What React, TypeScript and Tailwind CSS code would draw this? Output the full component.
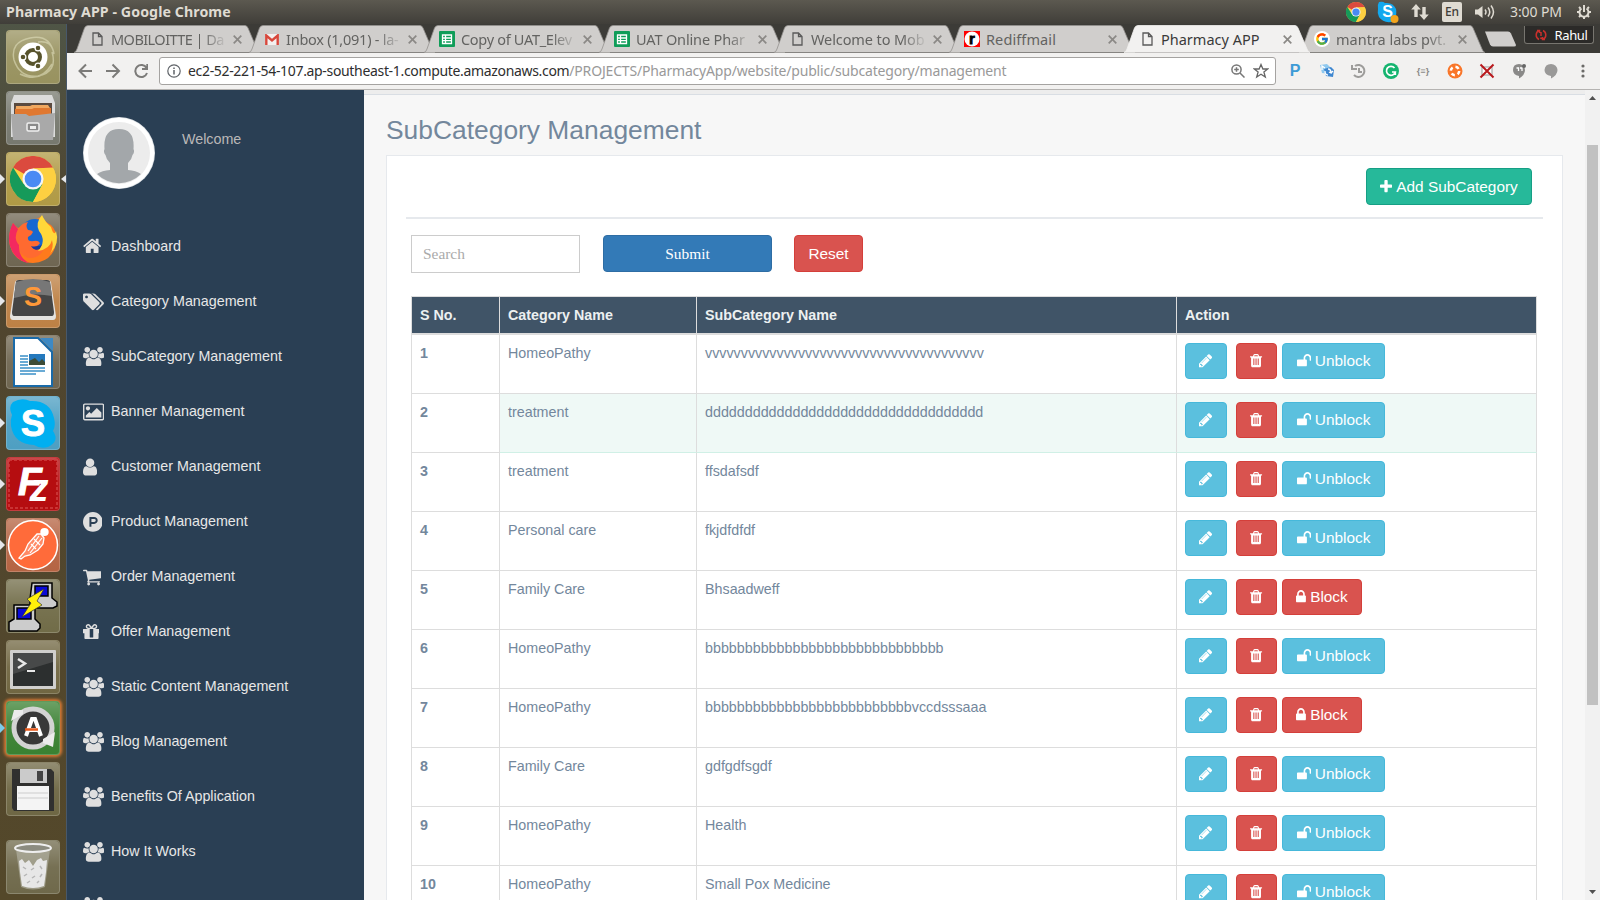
import React from "react";
import { FcGoogle } from "react-icons/fc";

const glyphs = {
  home: ["64 0 1664 1792", "M1472 992v480q0 26-19 45t-45 19h-384v-384h-256v384h-384q-26 0-45-19t-19-45v-480q0-1 .5-3t.5-3l575-474 575 474q1 2 1 6zm223-69l-62 74q-8 9-21 11h-3q-13 0-21-7l-692-577-692 577q-12 8-24 7-13-2-21-11l-62-74q-8-10-7-23.5t11-21.5l719-599q32-26 76-26t76 26l244 204v-195q0-14 9-23t23-9h192q14 0 23 9t9 23v408l219 182q10 8 11 21.5t-7 23.5z"],
  tags: ["0 0 1920 1792", "M448 448q0-53-37.5-90.5t-90.5-37.5-90.5 37.5-37.5 90.5 37.5 90.5 90.5 37.5 90.5-37.5 37.5-90.5zm1067 576q0 53-37 90l-491 492q-39 37-91 37-53 0-90-37l-715-716q-38-37-64.5-101t-26.5-117v-416q0-52 38-90t90-38h416q53 0 117 26.5t102 64.5l715 714q37 39 37 91zm384 0q0 53-37 90l-491 492q-39 37-91 37-36 0-59-14t-53-45l470-470q37-37 37-90 0-52-37-91l-715-714q-38-38-102-64.5t-117-26.5h224q53 0 117 26.5t102 64.5l715 714q37 39 37 91z"],
  users: ["0 0 1920 1792", "M593 896q-162 5-265 128h-134q-82 0-138-40.5t-56-118.5q0-353 124-353 6 0 43.5 21t97.5 42.5 119 21.5q67 0 133-23-5 37-5 66 0 139 81 256zm1071 637q0 120-73 189.5t-194 69.5h-874q-121 0-194-69.5t-73-189.5q0-53 3.5-103.5t14-109 26.5-108.5 43-97.5 62-81 85.5-53.5 111.5-20q10 0 43 21.5t73 48 107 48 135 21.5 135-21.5 107-48 73-48 43-21.5q61 0 111.5 20t85.5 53.5 62 81 43 97.5 26.5 108.5 14 109 3.5 103.5zm-1024-1277q0 106-75 181t-181 75-181-75-75-181 75-181 181-75 181 75 75 181zm704 384q0 159-112.5 271.5t-271.5 112.5-271.5-112.5-112.5-271.5 112.5-271.5 271.5-112.5 271.5 112.5 112.5 271.5zm576 225q0 78-56 118.5t-138 40.5h-134q-103-123-265-128 81-117 81-256 0-29-5-66 66 23 133 23 59 0 119-21.5t97.5-42.5 43.5-21q124 0 124 353zm-128-609q0 106-75 181t-181 75-181-75-75-181 75-181 181-75 181 75 75 181z"],
  image: ["0 0 1920 1792", "M640 576q0 80-56 136t-136 56-136-56-56-136 56-136 136-56 136 56 56 136zm1024 384v448h-1408v-192l320-320 160 160 512-512zm96-704h-1600q-13 0-22.5 9.5t-9.5 22.5v1216q0 13 9.5 22.5t22.5 9.5h1600q13 0 22.5-9.5t9.5-22.5v-1216q0-13-9.5-22.5t-22.5-9.5zm160 32v1216q0 66-47 113t-113 47h-1600q-66 0-113-47t-47-113v-1216q0-66 47-113t113-47h1600q66 0 113 47t47 113z"],
  user: ["256 0 1280 1792", "M1536 1399q0 109-62.5 187t-150.5 78h-854q-88 0-150.5-78t-62.5-187q0-85 8.5-160.5t31.5-152 58.5-131 94-89 134.5-34.5q131 128 313 128t313-128q76 0 134.5 34.5t94 89 58.5 131 31.5 152 8.5 160.5zm-256-887q0 159-112.5 271.5t-271.5 112.5-271.5-112.5-112.5-271.5 112.5-271.5 271.5-112.5 271.5 112.5 112.5 271.5z"],
  product: ["0 0 1792 1792", "M1150 762q0 56-39.5 95t-95.5 39h-253v-269h253q56 0 95.5 39.5t39.5 95.5zm179 0q0-130-91.5-222t-222.5-92h-433v896h180v-269h253q130 0 222-91.5t92-221.5zm463 134q0 182-71 348t-191 286-286 191-348 71-348-71-286-191-191-286-71-348 71-348 191-286 286-191 348-71 348 71 286 191 191 286 71 348z"],
  cart: ["64 0 1664 1792", "M704 1536q0 52-38 90t-90 38-90-38-38-90 38-90 90-38 90 38 38 90zm896 0q0 52-38 90t-90 38-90-38-38-90 38-90 90-38 90 38 38 90zm128-1088v512q0 24-16.5 42.5t-40.5 21.5l-1044 122q13 60 13 70 0 16-24 64h920q26 0 45 19t19 45-19 45-45 19h-1024q-26 0-45-19t-19-45q0-11 8-31.5t16-36 21.5-40 15.5-29.5l-177-823h-204q-26 0-45-19t-19-45 19-45 45-19h256q16 0 28.5 6.5t19.5 15.5 13 24.5 8 26 5.5 29.5 4.5 26h1201q26 0 45 19t19 45z"],
  gift: ["128 0 1536 1792", "M1056 1356v-716h-320v716q0 25 18 38.5t46 13.5h192q28 0 46-13.5t18-38.5zm-456-844h195l-126-161q-26-31-69-31-40 0-68 28t-28 68 28 68 68 28zm688-96q0-40-28-68t-68-28q-43 0-69 31l-125 161h194q40 0 68-28t28-68zm376 256v320q0 14-9 23t-23 9h-96v416q0 40-28 68t-68 28h-1088q-40 0-68-28t-28-68v-416h-96q-14 0-23-9t-9-23v-320q0-14 9-23t23-9h440q-93 0-158.5-65.5t-65.5-158.5 65.5-158.5 158.5-65.5q107 0 168 77l128 165 128-165q61-77 168-77 93 0 158.5 65.5t65.5 158.5-65.5 158.5-158.5 65.5h440q14 0 23 9t9 23z"],
  trash: ["192 0 1408 1792", "M704 1376v-704q0-14-9-23t-23-9h-64q-14 0-23 9t-9 23v704q0 14 9 23t23 9h64q14 0 23-9t9-23zm256 0v-704q0-14-9-23t-23-9h-64q-14 0-23 9t-9 23v704q0 14 9 23t23 9h64q14 0 23-9t9-23zm256 0v-704q0-14-9-23t-23-9h-64q-14 0-23 9t-9 23v704q0 14 9 23t23 9h64q14 0 23-9t9-23zm-544-992h448l-48-117q-7-9-17-11h-317q-10 2-17 11zm928 32v64q0 14-9 23t-23 9h-96v948q0 83-47 143.5t-113 60.5h-832q-66 0-113-58.5t-47-141.5v-952h-96q-14 0-23-9t-9-23v-64q0-14 9-23t23-9h309l70-167q15-37 54-63t79-26h320q40 0 79 26t54 63l70 167h309q14 0 23 9t9 23z"],
  pencil: ["128 0 1536 1792", "M491 1536l91-91-235-235-91 91v107h128v128h107zm523-928q0-22-22-22-10 0-17 7l-542 542q-7 7-7 17 0 22 22 22 10 0 17-7l542-542q7-7 7-17zm-54-192l416 416-832 832h-416v-416zm683 96q0 53-37 90l-166 166-416-416 166-165q36-38 90-38 53 0 91 38l235 234q37 39 37 91z"],
  plus: ["192 0 1408 1792", "M1600 736v192q0 40-28 68t-68 28h-416v416q0 40-28 68t-68 28h-192q-40 0-68-28t-28-68v-416h-416q-40 0-68-28t-28-68v-192q0-40 28-68t68-28h416v-416q0-40 28-68t68-28h192q40 0 68 28t28 68v416h416q40 0 68 28t28 68z"],
  lock: ["320 0 1152 1792", "M640 768h512v-192q0-106-75-181t-181-75-181 75-75 181v192zm832 96v576q0 40-28 68t-68 28h-960q-40 0-68-28t-28-68v-576q0-40 28-68t68-28h32v-192q0-184 132-316t316-132 316 132 132 316v192h32q40 0 68 28t28 68z"],
  unlock: ["64 0 1664 1792", "M1728 576v256q0 26-19 45t-45 19h-64q-26 0-45-19t-19-45v-256q0-106-75-181t-181-75-181 75-75 181v192h96q40 0 68 28t28 68v576q0 40-28 68t-68 28h-960q-40 0-68-28t-28-68v-576q0-40 28-68t68-28h672v-192q0-185 131.5-316.5t316.5-131.5 316.5 131.5 131.5 316.5z"],
} as const;

type GlyphName = keyof typeof glyphs;

function Glyph({ name, className }: { name: GlyphName; className: string }) {
  const [box, d] = glyphs[name];
  return (
    <svg viewBox={box} className={`w-auto shrink-0 ${className}`} fill="currentColor">
      <path d={d} />
    </svg>
  );
}

/* ---------- System panel ---------- */

function ChromeLogo({ className }: { className: string }) {
  return (
    <svg viewBox="0 0 48 48" className={className}>
      <circle cx="24" cy="24" r="24" fill="#fdd041" />
      <path d="M24 24 3.2 12A24 24 0 0 1 44.8 12L24 13Z" fill="#db4a3e" />
      <path d="M3.2 12A24 24 0 0 0 24 48L34 30 24 24 14 29Z" fill="#169a5a" />
      <path d="M24 13H45.3A24 24 0 0 1 24 48L34 29Z" fill="#fdd041" />
      <circle cx="24" cy="24" r="11" fill="#f5f5f5" />
      <circle cx="24" cy="24" r="8.7" fill="#4a8af4" />
    </svg>
  );
}

function SystemPanel() {
  return (
    <header className="flex h-6 shrink-0 items-center justify-between bg-linear-to-b from-[#5c5950] to-[#403e39] pl-1.5 pr-2 text-[#dfdbd2]">
      <span className="text-[14.2px] font-bold leading-6 tracking-[0.08px]">Pharmacy APP - Google Chrome</span>
      <div className="flex items-center">
        <ChromeLogo className="size-5" />
        <svg viewBox="0 0 22 22" className="ml-[11px] size-[22px]">
          <path d="M2 1q4-1 6 1 8-1 11 6 1 5-1 8 1 5-4 5-8 1-12-5Q0 12 1 8q-1-4 1-7Z" fill="#12a8ee" />
          <text x="10.5" y="16" textAnchor="middle" fontSize="16" fontWeight="700" fill="#fff" fontFamily="Liberation Sans">S</text>
          <circle cx="17.5" cy="18" r="4" fill="#f4a51c" />
        </svg>
        <svg viewBox="0 0 18 18" className="ml-3 size-[18px]" fill="#dfdbd2">
          <path d="M5 1 9.8 6.500H6.700V14H3.300V6.500H.2ZM13 17 8.200 11.500H11.300V4H14.700V11.500H17.800Z" />
        </svg>
        <span className="ml-[13px] flex h-5 w-5 items-center justify-center rounded-[2px] bg-[#dfdbd2] text-[12px] font-medium text-[#3f3d38]">En</span>
        <svg viewBox="0 0 20 16" className="ml-[13px] h-4 w-5" fill="none" stroke="#dfdbd2" strokeWidth="1.500">
          <path d="M0 5.500H3L7.500 2V14L3 10.500H0Z" fill="#dfdbd2" stroke="none" />
          <path d="M10 5.500q2 2.500 0 5M13 3.500q3.500 4.500 0 9M16 1.500q5 6.500 0 13" />
        </svg>
        <span className="ml-[15px] w-[53px] whitespace-nowrap text-[14px] leading-5 tracking-[-0.1px]">3:00 PM</span>
        <svg viewBox="0 0 16 16" className="ml-[13px] size-4" fill="none" stroke="#dfdbd2">
          <path d="M5.500 4.500a4.500 4.500 0 1 0 5 0M8 1V8" strokeWidth="2" />
          <path d="M8 15v-2M1 8h2M13 8h2M3 3l1.500 1.500M13 3l-1.500 1.500M3 13l1.500-1.500M13 13l-1.500-1.500" strokeWidth="2" />
        </svg>
      </div>
    </header>
  );
}

/* ---------- Launcher ---------- */

const appArt: Record<string, React.ReactNode> = {
  ubuntu: (
    <>
      <path d="M8 30Q4 12 24 8 44 4 48 24 46 10 32 12M46 22Q52 42 32 46 14 48 8 30M14 44Q34 54 46 34" fill="none" stroke="#e0debb" strokeWidth="1.500" opacity=".6" />
      <circle cx="27" cy="27" r="14.500" fill="#fff" />
      <circle cx="27" cy="27" r="7" fill="none" stroke="#57532c" strokeWidth="4" />
      <g fill="#57532c" stroke="#fff" strokeWidth="1.200"><circle cx="17" cy="27" r="2.900" /><circle cx="32" cy="18" r="2.900" /><circle cx="32" cy="36" r="2.900" /></g>
    </>
  ),
  files: (
    <>
      <path d="M8 4H46L49 12V46H5V12Z" fill="#dcdcdc" />
      <path d="M8 12H46V26H8Z" fill="#5a4a40" />
      <path d="M10 15H24L26 14H42L44 17V26H9Z" fill="#f0a860" /><path d="M9 18H26L28 17H45V26H9Z" fill="#e07830" />
      <path d="M5 23H20L23 25 49 22 47 49H7Z" fill="#a9a9a9" />
      <rect x="21" y="32" width="12" height="8" rx="1.500" fill="#8a8a8a" stroke="#eee" strokeWidth="1.500" /><rect x="24" y="35" width="6" height="3" fill="#eee" />
    </>
  ),
  firefox: (
    <>
      <path d="M7 11Q1 22 4 33 9 50 27 50 46 49 50 31 52 19 45 12 38 9 36 3L20 12 12 15Z" fill="#ff7a1c" />
      <circle cx="29" cy="21" r="15" fill="#1668d0" />
      <path d="M20 27Q31 40 43 26 42 36 30 37 20 36 16 29Z" fill="#183a9c" />
      <path d="M7 10 12 16Q16 10 22 9 19 13 22 17 26 17 27 19 26 22 22 24 21 29 28 28 32 27 34 30 31 35 25 33 29 40 38 35 34 46 22 45 8 38 6 26 4 17 7 10Z" fill="#ff6a30" />
      <path d="M7 10Q1 22 4 33 9 48 23 50 12 44 13 32 7 26 12 16Z" fill="#f3295f" />
      <path d="M36 2Q29 10 33 18 41 28 32 38 44 36 46 27 48 34 44 41 54 30 50 18 48 24 45 14 39 9 36 2Z" fill="#ffd83a" />
    </>
  ),
  sublime: (
    <>
      <path d="M9 8Q10 6 13 6H41Q44 6 45 8L50 42Q50 46 47 46H7Q4 46 4 42Z" fill="#e4e2df" />
      <path d="M10 8Q10 6 13 6H41Q44 6 44 8L48 38Q48 42 46 42H8Q6 42 6 38Z" fill="#454545" /><path d="M10 8Q27 2 44 8L46 22Q27 18 8 24Z" fill="#777" />
      <text x="27" y="32" textAnchor="middle" fontSize="27" fontWeight="700" fill="#ff9838" fontFamily="Liberation Sans">S</text>
    </>
  ),
  writer: (
    <>
      <path d="M8 3H32L46 17V51H8Z" fill="#fff" stroke="#1a6aa8" strokeWidth="2" /><path d="M34 3H47V16Z" fill="#3d89c4" />
      <path d="M14 21H22M14 24H22M14 27H22M14 30H22M14 33H39M14 36H39M14 39H30" stroke="#3a90c8" strokeWidth="1.700" />
      <rect x="23" y="19" width="16" height="11" fill="#2579bd" /><path d="M23 30V26L29 23 33 27 36 24 39 27V30Z" fill="#3c4c38" />
    </>
  ),
  skype: (
    <>
      <path d="M7 6Q16 1 24 5 44 4 48 22 50 30 47 35 54 45 42 51 34 53 28 49 8 48 5 30 4 24 6 19 2 11 7 6Z" fill="#00aff0" />
      <text x="27" y="40" textAnchor="middle" fontSize="36" fontWeight="700" fill="#fff" stroke="#fff" strokeWidth="1" fontFamily="Liberation Sans">S</text>
    </>
  ),
  filezilla: (
    <>
      <rect x="3" y="3" width="48" height="48" fill="#b50d10" stroke="#cf4040" strokeWidth="1.500" strokeDasharray="3 2" />
      <text x="24" y="38" textAnchor="middle" fontSize="39" fontWeight="700" fontStyle="italic" fill="#fff" stroke="#fff" strokeWidth="1" fontFamily="Liberation Sans">F</text>
      <text x="33" y="44" textAnchor="middle" fontSize="38" fontWeight="700" fontStyle="italic" fill="#fff" fontFamily="Liberation Sans">z</text>
    </>
  ),
  postman: (
    <>
      <circle cx="27" cy="27" r="24.500" fill="#ff6b3a" stroke="#fff" strokeWidth="1.500" />
      <ellipse cx="38.500" cy="14" rx="4.200" ry="4" fill="#fff" />
      <path d="M31 16 35 16 38 20 37 26 32 32 24 37 19 38 15 41 13 40 19 33 22 26Z" fill="#ff8a66" stroke="#fff" strokeWidth="1.300" />
      <path d="M33 18 22 33M36 20 24 35M28 21 34 27M25 26 30 31" stroke="#fff" strokeWidth="1.200" />
    </>
  ),
  putty: (
    <g stroke="#000" strokeWidth="1.500">
      <path d="M26 4H46V19L51 23V27L47 29H24V20Z" fill="#ccc" /><rect x="29" y="7" width="13" height="10" fill="#0a0ad8" />
      <path d="M8 26H29V40L34 45V49L31 52H3V43L8 40Z" fill="#ccc" /><rect x="11" y="29" width="14" height="11" fill="#0a0ad8" />
      <path d="M38 10 21 20 25 24 16 38 36 26 31 22Z" fill="#ffef0a" stroke="#333" strokeWidth=".7" />
    </g>
  ),
  terminal: (
    <>
      <rect x="4" y="10" width="46" height="39" rx="1" fill="#d0cfcd" /><rect x="7" y="13" width="40" height="33" fill="#2c2f2f" /><path d="M7 13H47V22L7 34Z" fill="#565858" opacity=".65" />
      <path d="M12 19 19 23.500 12 28" fill="none" stroke="#e8e8e8" strokeWidth="2.500" /><path d="M21 31H29" stroke="#e8e8e8" strokeWidth="2" />
    </>
  ),
  updater: (
    <>
      <circle cx="27" cy="27" r="19" fill="#383838" stroke="#d3d3d3" strokeWidth="5" />
      <path d="M5 20 17 13 17 9 8 9ZM37 38 49 31 47 46 37 42Z" fill="#ececec" />
      <path d="M20 35 26 18H29L35 35M21 29H34" fill="none" stroke="#fff" strokeWidth="4" /><path d="M19 28.500H32" stroke="#e85a1c" strokeWidth="2.500" />
    </>
  ),
  floppy: (
    <>
      <path d="M6 7H45L48 10V49H8L6 46Z" fill="#30302f" /><rect x="14" y="7" width="27" height="14" fill="#cbcbcb" /><rect x="31" y="9" width="6" height="10" fill="#444" />
      <path d="M11 24H43V48H11Z" fill="#f4f4f4" /><path d="M12 31H42M12 36H42" stroke="#ccc" />
    </>
  ),
  trash: (
    <>
      <path d="M10 9 15 47Q27 52 39 47L44 9Z" fill="#b9b9ac" opacity=".6" /><ellipse cx="27" cy="8" rx="18" ry="4" fill="#8c8c80" stroke="#eee" strokeWidth="2" />
      <path d="M13 21 16 19 19 23 23 20 27 26 31 20 35 18 37 21 41 20 40 32 38 46Q27 50 16 46L14 32Z" fill="#e7e7e7" />
      <path d="M17 27 20 29M25 30 28 28M34 26 36 29M18 36 21 34M26 38 29 36M34 37 36 34M21 43 24 41M31 43 33 41" fill="none" stroke="#b5b5b5" strokeWidth="1.500" />
    </>
  ),
};

const launcherItems = [
  { id: "ubuntu", tile: "bg-[#98925f]" },
  { id: "files", tile: "bg-[#77796f]" },
  { id: "chrome", tile: "bg-[#b09a45]", running: "text-gray-200", focused: true },
  { id: "firefox", tile: "bg-[#6f6652]" },
  { id: "sublime", tile: "bg-[#bd8145]", running: "text-gray-200" },
  { id: "writer", tile: "bg-[#6f6651]" },
  { id: "skype", tile: "bg-[#4e9fc2]", running: "text-gray-200" },
  { id: "filezilla", tile: "bg-[#b50d10]", running: "text-gray-200" },
  { id: "postman", tile: "bg-[#b56443]", running: "text-gray-200" },
  { id: "putty", tile: "bg-[#716c48]" },
  { id: "terminal", tile: "bg-[#716742]" },
  { id: "updater", tile: "bg-[#3a8132] shadow-[0_0_3px_2px_#d77834]", running: "text-[#7ccbea]" },
  { id: "floppy", tile: "bg-[#6e6744]" },
  { id: "trash", tile: "bg-[#6f694b] mt-[17px]" },
];

function Launcher() {
  return (
    <nav className="flex w-[67px] shrink-0 flex-col gap-[7px] border-r border-[#48586a] bg-linear-to-b from-[#4f5546] from-0% via-[#4f4530] via-22% to-[#54482a] pt-1.5">
      {launcherItems.map((item) => (
        <div key={item.id} className={`relative mx-1.5 h-[54px] w-[54px] shrink-0 rounded-[4px] border border-white/20 ${item.tile}`}>
          <div className="absolute inset-0 rounded-[4px] bg-linear-to-b from-white/25 via-white/5 to-transparent" />
          {item.id === "chrome" ? (
            <ChromeLogo className="absolute left-[3px] top-[3px] size-[46px]" />
          ) : (
            <svg viewBox="0 0 54 54" className="absolute -left-px -top-px size-[54px]">{appArt[item.id]}</svg>
          )}
          {item.running && (
            <svg viewBox="0 0 5 10" className={`absolute -left-[7px] top-[21px] h-2.5 w-[5px] ${item.running}`} fill="currentColor"><path d="M0 0 5 5 0 10Z" /></svg>
          )}
          {item.focused && (
            <svg viewBox="0 0 5 8" className="absolute -right-[7px] top-[22px] h-2 w-[5px]" fill="#e5e7eb"><path d="M5 0 0 4 5 8Z" /></svg>
          )}
        </div>
      ))}
    </nav>
  );
}

/* ---------- Browser chrome ---------- */

const pageIcon = (
  <svg viewBox="0 0 11 14" className="ml-0.5 h-3.5 w-[11px]" fill="none" stroke="#5a5a5a" strokeWidth="1.300"><path d="M1 1H6.500L10 4.500V13H1ZM6.500 1V4.500H10" /></svg>
);
const sheetIcon = (
  <svg viewBox="0 0 16 16" className="-ml-px size-4"><rect width="16" height="16" rx="1" fill="#0f9d58" /><path d="M3.500 4H12.500V12.500H3.500ZM3.500 7H12.500M3.500 9.700H12.500M6.500 4V12.500" fill="none" stroke="#fff" strokeWidth="1.300" /></svg>
);

const fade = "mask-r-from-78% mask-r-to-100% text-[#636361]";

const tabs = [
  { title: "MOBILOITTE | Da", text: `${fade} tracking-[-0.55px]`, icon: pageIcon },
  { title: "Inbox (1,091) - la-", text: `${fade} tracking-[-0.25px]`, icon: <svg viewBox="0 0 14 11" className="h-[11px] w-3.5"><rect width="14" height="11" fill="#f3f0ef" /><path d="M1.300 11V1.500L7 6.500 12.700 1.500V11" fill="none" stroke="#d8483c" strokeWidth="2.400" /></svg> },
  { title: "Copy of UAT_Elev", text: `${fade} tracking-[-0.3px]`, icon: sheetIcon },
  { title: "UAT Online Phar", text: `${fade} tracking-[-0.15px]`, icon: sheetIcon },
  { title: "Welcome to Mob", text: `${fade} tracking-[-0.1px]`, icon: pageIcon },
  { title: "Rediffmail", text: "text-[#636361] tracking-[0.1px]", icon: <svg viewBox="0 0 16 16" className="-ml-px size-4"><rect width="16" height="16" fill="#f00" /><circle cx="8" cy="8" r="7.500" fill="#fff" /><text x="8" y="12.500" textAnchor="middle" fontSize="15" fontWeight="700" stroke="#000" strokeWidth=".8" fontFamily="Liberation Sans">r</text></svg> },
  { title: "Pharmacy APP", text: "text-[#3a3a3a]", icon: pageIcon, active: true },
  { title: "mantra labs pvt.", text: fade, icon: <span className="-ml-px rounded-full bg-white p-px"><FcGoogle className="size-3.5" /></span> },
];

function TabStrip() {
  return (
    <div className="flex h-[29px] shrink-0 items-end bg-[#3c3b37] pl-[7px]">
      {tabs.map((tab) => (
        <div key={tab.title} className={`relative -mr-[11px] flex h-7 w-[186px] shrink-0 items-center pl-4 ${tab.active ? "z-10" : ""}`}>
          <svg viewBox="0 0 186 28" className="absolute inset-0 h-7 w-[186px]">
            <path d="M0 27.500Q2 27 3 24L10.500 3Q11.500 .5 14 .5H171Q173 .5 174 3L183 24Q184 27 186 27.500Z" fill={tab.active ? "#f2f1f0" : "#d0cecc"} />
            <path d="M0 27.500Q2 27 3 24L10.500 3Q11.500 .5 14 .5H171Q173 .5 174 3L183 24Q184 27 186 27.500" fill="none" stroke={tab.active ? "#f2f1f0" : "#94928f"} strokeWidth=".8" />
            {tab.active && <path d="M0 28H186" stroke="#f2f1f0" strokeWidth="1" />}
          </svg>
          <span className="relative flex w-[21px] shrink-0 items-center">{tab.icon}</span>
          <span className={`relative w-[117px] whitespace-nowrap text-[14.500px] leading-6 ${tab.text}`}>{tab.title}</span>
          <svg viewBox="0 0 9 9" className="relative ml-[5px] size-[9px] shrink-0" stroke="#8b8986" strokeWidth="1.700"><path d="M.7.7 8.300 8.300M8.300.7.7 8.300" /></svg>
        </div>
      ))}
      <svg viewBox="0 0 34 18" className="mb-[5px] ml-[10px] h-[18px] w-[34px] shrink-0"><path d="M1 1.500H24Q26 1.500 27 3.500L32 15Q32 16.500 30 16.500H9Q7 16.500 6 14.500Z" fill="#d0cecc" /></svg>
      <div className="mb-[9px] ml-[6px] flex h-[18px] w-[70px] items-center justify-center gap-2 rounded-b-[3px] border border-t-0 border-[#77756f] bg-[#2b2a28] pl-1 text-[13px] leading-4 text-white">
        <svg viewBox="0 0 12 12" className="size-3" fill="none" stroke="#c9302c" strokeWidth="1.500"><path d="M4 1.500A5 5 0 0 0 4 10.500M8 1.500A5 5 0 0 1 8 10.500M6 3V7M6 8.500V10M2 1.500H4.500V4M10 10.500H7.500V8" /></svg>
        <span className="tracking-[-0.4px]">Rahul</span>
      </div>
    </div>
  );
}

function Toolbar() {
  return (
    <div className="flex h-[37px] shrink-0 items-center border-b border-[#b5b3b1] bg-[#f2f1f0] pl-[11px]">
      <svg viewBox="0 0 70 16" className="h-4 w-[70px]" fill="none" stroke="#7c7b79" strokeWidth="2">
        <path d="M14 8H1.500M8 1.500 1.500 8 8 14.500M28 8H41M34.500 1.500 41 8 34.500 14.500" />
        <path d="M68.500 5A6 6 0 1 0 69 10M69.300 1V6H64" />
      </svg>
      <div className="ml-[11px] flex h-7 w-[1117px] items-center rounded-[3px] border border-[#a5a3a1] bg-white pl-[7px] pr-[6px]">
        <svg viewBox="0 0 14 14" className="size-3.5" fill="none" stroke="#5f6368" strokeWidth="1.200"><circle cx="7" cy="7" r="6.200" /><path d="M7 6V10.500M7 3.500V5" strokeWidth="1.500" /></svg>
        <span className="ml-[7px] flex flex-1 whitespace-nowrap text-[14px] leading-6 text-[#999]">
          <span className="tracking-[-0.33px] text-[#2e2e2e]">ec2-52-221-54-107.ap-southeast-1.compute.amazonaws.com</span>
          <span className="tracking-[-0.18px]">/PROJECTS/PharmacyApp/website/public/subcategory/management</span>
        </span>
        <svg viewBox="0 0 14 14" className="size-3.5" fill="none" stroke="#777" strokeWidth="1.500"><circle cx="5.500" cy="5.500" r="4.600" /><path d="M9 9 13.500 13.500M3.200 5.500H7.800M5.500 3.200V7.800" /></svg>
        <svg viewBox="0 0 16 16" className="ml-2 size-4" fill="none" stroke="#666" strokeWidth="1.300"><path d="M8 1.500 9.900 6H14.700L10.900 9 12.300 14 8 11.200 3.700 14 5.100 9 1.300 6H6.100Z" /></svg>
      </div>
      <div className="ml-[11px] flex w-[304px] items-center justify-between">
        <span className="w-4 text-center font-['Liberation_Sans'] text-[16px] font-bold leading-4 text-[#3d9bd6]">P</span>
        <svg viewBox="0 0 16 16" className="size-4"><path d="M1 2 8 1 11 4V11L3 10Z" fill="#8fc8ee" /><path d="M5 6 12 4 15 7 14 14 7 13Z" fill="#3f87d0" /><path d="M3 7V3L6 5M6 8Q6 12 9 12M9 6Q12 6 12 10L10 9M12 10 14 8" stroke="#fff" strokeWidth="1.300" fill="none" /></svg>
        <svg viewBox="0 0 16 16" className="size-4" fill="none" stroke="#9d9c9a" strokeWidth="2"><path d="M4 3A6 6 0 1 1 3 12M1 2V6H6M8 5V9H11" /></svg>
        <svg viewBox="0 0 16 16" className="size-4"><circle cx="8" cy="8" r="8" fill="#15b46f" /><path d="M11.500 5A4.500 4.500 0 1 0 12.300 9H9M12.300 9V12" fill="none" stroke="#fff" strokeWidth="1.700" /></svg>
        <span className="w-4 text-center text-[9px] font-bold text-[#8b8a88]">{"{≡}"}</span>
        <svg viewBox="0 0 16 16" className="size-4"><circle cx="8" cy="8" r="7.500" fill="#f9762a" /><circle cx="8" cy="8" r="4.200" fill="none" stroke="#fff" strokeWidth="2.500" strokeDasharray="3.600 3" /></svg>
        <svg viewBox="0 0 16 16" className="size-4"><path d="M3 4H13V12H3Z" fill="#fff" stroke="#999" /><path d="M1.500 1.500 14.500 14.500M14.500 1.500 1.500 14.500" stroke="#b9191d" strokeWidth="2" /></svg>
        <svg viewBox="0 0 16 16" className="size-4"><path d="M8 1a6.500 6 0 0 1 6 6q0 5-6 8.500V13Q2 12 2 7 2 1 8 1Z" fill="#8a8988" /><path d="M5.500 5H7.500V8M9 5H11V8" stroke="#fff" strokeWidth="1.300" fill="none" /><circle cx="13" cy="3" r="2" fill="#666" /></svg>
        <svg viewBox="0 0 16 16" className="size-4"><path d="M8 1a6.500 6 0 0 1 6.500 6q0 5-6.500 8.500V13Q1.500 12 1.500 7 2 1 8 1Z" fill="#9a9998" /></svg>
        <svg viewBox="0 0 16 16" className="size-4" fill="#6b6a68"><circle cx="8" cy="3" r="1.600" /><circle cx="8" cy="8" r="1.600" /><circle cx="8" cy="13" r="1.600" /></svg>
      </div>
    </div>
  );
}

/* ---------- Application ---------- */

const menu: { label: string; icon: GlyphName }[] = [
  { label: "Dashboard", icon: "home" },
  { label: "Category Management", icon: "tags" },
  { label: "SubCategory Management", icon: "users" },
  { label: "Banner Management", icon: "image" },
  { label: "Customer Management", icon: "user" },
  { label: "Product Management", icon: "product" },
  { label: "Order Management", icon: "cart" },
  { label: "Offer Management", icon: "gift" },
  { label: "Static Content Management", icon: "users" },
  { label: "Blog Management", icon: "users" },
  { label: "Benefits Of Application", icon: "users" },
  { label: "How It Works", icon: "users" },
  { label: "", icon: "users" },
];

function Sidebar() {
  return (
    <aside className="flex w-[297px] shrink-0 flex-col overflow-hidden bg-[#2a3f54]">
      <div className="flex h-[128.800px] shrink-0 pl-4 pt-[27px]">
        <svg viewBox="0 0 72 72" className="size-[72px]">
          <circle cx="36" cy="36" r="36" fill="#dfe3e6" />
          <circle cx="36" cy="36" r="35.200" fill="#fff" />
          <circle cx="36" cy="36" r="31" fill="#ececec" />
          <path d="M14 57Q19 53.500 27 53V46Q23 42 22.500 38 20 35 21.500 32 20 12 36 12 52 12 50.500 32 52 35 49.500 38 49 42 45 46V53Q53 53.500 58 57A31 31 0 0 1 14 57Z" fill="#a3a7aa" />
        </svg>
        <span className="ml-[27px] mt-3 text-[14.300px] leading-5 text-[#bab8b8]">Welcome</span>
      </div>
      {menu.map((item, i) => (
        <div key={i} className="flex h-[55.080px] shrink-0 items-center pl-[15.500px] text-[14.300px] text-[#e7e7e7]">
          <span className="flex w-[28.500px] items-center text-[#dfdfdf]"><Glyph name={item.icon} className="h-[19.800px]" /></span>
          {item.label}
        </div>
      ))}
    </aside>
  );
}

const rows = [
  ["HomeoPathy", "vvvvvvvvvvvvvvvvvvvvvvvvvvvvvvvvvvvvvvv", false],
  ["treatment", "ddddddddddddddddddddddddddddddddddd", false],
  ["treatment", "ffsdafsdf", false],
  ["Personal care", "fkjdfdfdf", false],
  ["Family Care", "Bhsaadweff", true],
  ["HomeoPathy", "bbbbbbbbbbbbbbbbbbbbbbbbbbbbbb", false],
  ["HomeoPathy", "bbbbbbbbbbbbbbbbbbbbbbbbbbvccdsssaaa", true],
  ["Family Care", "gdfgdfsgdf", false],
  ["HomeoPathy", "Health", false],
  ["HomeoPathy", "Small Pox Medicine", false],
] as const;

const info = "border-[#46b8da] bg-[#5bc0de]";
const danger = "border-[#d43f3a] bg-[#d9534f]";
const button = "flex items-center justify-center rounded-[4px] border text-[15.400px] text-white";

function SubCategoryTable() {
  return (
    <div className="ml-[5px] mt-[23px] w-[1126px] border-l border-t border-[#ddd] text-[14.300px] leading-5">
      <div className="flex h-[38px] border-b-2 border-[#ddd] bg-[#405467] font-bold text-[#ecf0f1] *:border-r *:border-[#ddd] *:pl-2 *:pt-2">
        <div className="w-[88px]">S No.</div>
        <div className="w-[197px]">Category Name</div>
        <div className="w-[480px]">SubCategory Name</div>
        <div className="w-[360px]">Action</div>
      </div>
      {rows.map(([category, name, active], i) => (
        <div key={i} className={`flex h-[59px] *:border-b *:border-r *:border-r-[#ddd] *:pl-2 *:pt-2 ${i === 1 ? "bg-[#eff9f6] *:border-b-[#d0f0e6] *:first:border-b-[#ddd]" : "*:border-b-[#ddd]"}`}>
          <div className="w-[88px] bg-white font-bold">{i + 1}</div>
          <div className="w-[197px]">{category}</div>
          <div className="w-[480px]">{name}</div>
          <div className="flex w-[360px]">
            <button className={`${button} ${info} h-9 w-[42px]`}><Glyph name="pencil" className="h-[15.400px]" /></button>
            <button className={`${button} ${danger} ml-[9px] h-9 w-[41px]`}><Glyph name="trash" className="h-[15.400px]" /></button>
            {active ? (
              <button className={`${button} ${danger} ml-[5px] h-9 w-20 gap-1`}><Glyph name="lock" className="h-[15.400px]" />Block</button>
            ) : (
              <button className={`${button} ${info} ml-[5px] h-9 w-[103px] gap-1`}><Glyph name="unlock" className="h-[15.400px]" />Unblock</button>
            )}
          </div>
        </div>
      ))}
    </div>
  );
}

function MainContent() {
  return (
    <main className="flex min-w-0 flex-1 flex-col overflow-hidden bg-[#f7f7f7] text-[#73879c]">
      <div className="h-[5px] shrink-0 border-b border-[#d9dee4] bg-[#ededed]" />
      <h1 className="ml-[22px] mt-5 shrink-0 text-[26.400px] leading-[30px]">SubCategory Management</h1>
      <section className="ml-[22px] mt-[10px] w-[1177px] shrink-0 border border-[#e6e9ed] bg-white pl-[19px]">
        <div className="flex h-[63px] w-[1137px] items-start justify-end border-b-2 border-[#e6e9ed] pr-[11px] pt-3">
          <button className={`${button} h-[37px] w-[166px] gap-1 border-[#169f85] bg-[#26b99a]`}><Glyph name="plus" className="h-[15.400px]" />Add SubCategory</button>
        </div>
        <div className="ml-[5px] mt-4 flex h-[38px] items-start">
          <input placeholder="Search" className="h-[38px] w-[169px] border border-[#ccc] px-[11px] font-['Liberation_Serif'] text-[15.400px] placeholder:text-[#aaa]" />
          <button className={`${button} ml-[23px] h-[37px] w-[169px] border-[#2e6da4] bg-[#337ab7] font-['Liberation_Serif']`}>Submit</button>
          <button className={`${button} ${danger} ml-[22px] h-[37px] w-[69px]`}>Reset</button>
        </div>
        <SubCategoryTable />
      </section>
    </main>
  );
}

function Scrollbar() {
  return (
    <div className="flex w-[15px] shrink-0 flex-col items-center bg-[#f1f1f1] pt-[6px]">
      <svg viewBox="0 0 7 4" className="h-1 w-[7px]"><path d="M0 4 3.500 0 7 4Z" fill="#505050" /></svg>
      <div className="mt-[45px] h-[560px] w-[11px] bg-[#c1c1c1]" />
      <svg viewBox="0 0 7 4" className="mt-auto mb-[6px] h-1 w-[7px]"><path d="M0 0H7L3.500 4Z" fill="#505050" /></svg>
    </div>
  );
}

export default function App() {
  return (
    <div className="flex h-[900px] w-[1600px] flex-col overflow-hidden font-['Noto_Sans',sans-serif]">
      <SystemPanel />
      <div className="flex min-h-0 flex-1">
        <Launcher />
        <div className="flex min-w-0 flex-1 flex-col">
          <TabStrip />
          <Toolbar />
          <div className="flex min-h-0 flex-1 font-['Liberation_Sans',sans-serif]">
            <Sidebar />
            <MainContent />
            <Scrollbar />
          </div>
        </div>
      </div>
    </div>
  );
}
